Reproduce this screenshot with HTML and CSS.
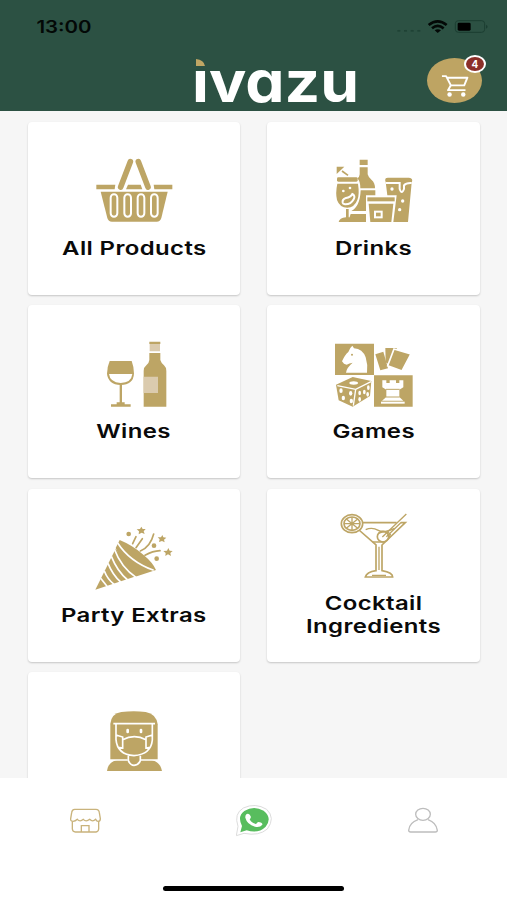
FILE: index.html
```html
<!DOCTYPE html>
<html lang="en">
<head>
<meta charset="utf-8">
<title>ivazu</title>
<link rel="stylesheet" href="styles.css">
</head>
<body>
<div class="app">
  <header class="header">
    <div class="status">
      <div class="time"><span class="wide">13:00</span></div>
      <svg class="status-icons" viewBox="1185 50 285 55">
        <g fill="#1f4235"><rect x="1192" y="89" width="9" height="5"/><rect x="1212" y="89" width="9" height="5"/><rect x="1232" y="89" width="9" height="5"/><rect x="1252" y="89" width="9" height="5"/></g>
        <g fill="none" stroke="#030806" stroke-width="8"><path d="M1286 74Q1313 52 1340 74"/><path d="M1296 84Q1313 70 1331 84"/></g>
        <path d="M1304 90Q1313 83 1323 90L1313 98Z" fill="#030806"/>
        <rect x="1366" y="61" width="88" height="35" rx="9" fill="none" stroke="#1b3d31" stroke-width="3"/>
        <rect x="1373" y="67" width="39" height="24" rx="4" fill="#000"/>
        <path d="M1458 73Q1468 79 1458 85Z" fill="#1b3d31"/>
      </svg>
    </div>
    <div class="nav">
      <svg class="logo" viewBox="190 52 172 56">
        <text class="logo-text" x="192" y="101.5" textLength="167" lengthAdjust="spacingAndGlyphs">ivazu</text>
        <rect x="192" y="52" width="15" height="17.3" fill="#2c5143"/>
        <path d="M196 59Q204 60 205 66H196Z" fill="#c0a664"/>
      </svg>
      <div class="cart">
        <svg class="cart-icon" viewBox="150 188 88 74" fill="none" stroke="#fff" stroke-width="6" stroke-linejoin="round">
          <path d="M153 194H166L181 223H223L233 199H169"/><path d="M181 223L172 238H227"/>
          <circle cx="177" cy="252" r="7" fill="#fff" stroke="none"/><circle cx="220" cy="252" r="7" fill="#fff" stroke="none"/>
        </svg>
        <span class="badge">4</span>
      </div>
    </div>
  </header>

  <main class="grid">
    <div class="card">
      <svg class="icon" viewBox="216 120 252 216" fill="#bda565">
        <path d="M331 140L302 216M355 140L384 216" stroke="#bda565" stroke-width="17" stroke-linecap="round"/>
        <path d="M229 209H286L284 223H229ZM401 209H457V223H403ZM324 209H362L367 223H318Z"/>
        <path d="M242 230H443L424 309Q421 320 410 320H276Q265 320 262 309Z"/>
        <g fill="#bda565" stroke="#fff" stroke-width="6"><rect x="272" y="238" width="20" height="67" rx="10"/><rect x="313" y="238" width="20" height="67" rx="10"/><rect x="353" y="238" width="20" height="67" rx="10"/><rect x="393" y="238" width="20" height="67" rx="10"/></g>
      </svg>
      <div class="label"><span class="wide">All Products</span></div>
    </div>
    <div class="card">
      <svg class="icon" viewBox="36 30 252 216" fill="#bda565">
        <path d="M119 44H143V60H119ZM119 67H143V88Q145 97 155 105Q165 113 165 130H121Q121 108 112 100Q119 96 119 88Z"/>
        <path d="M122 136H166V151H138V198H94Q120 185 122 136ZM92 207H138V231H100Q98 222 88 219Z"/>
        <path d="M50 65H73L50 87Z"/><path d="M66 78L84 91" stroke="#bda565" stroke-width="5"/>
        <rect x="51" y="97" width="62" height="13" rx="4"/>
        <path d="M52 116H114Q119 149 112 165Q103 188 82 188Q59 188 51 165Q46 144 52 116Z"/>
        <path d="M78 192H86V217Q105 219 107 231H56Q58 219 78 217Z"/>
        <path d="M68 173Q66 163 78 159Q92 157 97 147Q107 152 101 163Q92 179 75 178Q69 177 68 173Z" fill="#bda565" stroke="#fff" stroke-width="6"/>
        <g fill="#fff"><circle cx="70" cy="138" r="4"/><circle cx="90" cy="129" r="4"/></g>
        <rect x="142" y="157" width="82" height="12"/><path d="M146 176H220L214 231H151Z"/>
        <rect x="165" y="200" width="20" height="17" fill="none" stroke="#fff" stroke-width="6"/>
        <path d="M197 111Q192 98 204 98H267Q281 99 275 113L264 231H220L230 151H202Z"/>
        <path d="M197 114H239V132Q245 150 252 132V121Q258 113 275 114" fill="none" stroke="#fff" stroke-width="6"/>
        <g fill="#fff"><circle cx="216" cy="132" r="5"/><circle cx="248" cy="168" r="5"/><circle cx="239" cy="194" r="5"/></g>
      </svg>
      <div class="label"><span class="wide">Drinks</span></div>
    </div>
    <div class="card">
      <svg class="icon" viewBox="6 25 252 216" fill="#bda565">
        <path d="M59 94H125Q132 112 132 132Q130 165 92 166Q54 164 51 132Q51 113 59 94Z"/>
        <path d="M57 133H127Q124 159 92 160Q60 158 57 133Z" fill="#fff"/>
        <path d="M89 164H96V218H104V224H122V231H63V224H80V218H89Z"/>
        <path d="M178 36H211V43H178ZM178 70H211V91Q214 101 222 107Q229 113 229 124V231H161V124Q161 113 169 107Q177 101 178 91Z"/>
        <path d="M179 43H210V65H179ZM161 141H204V190H161Z" fill="#dbcbae"/>
      </svg>
      <div class="label"><span class="wide">Wines</span></div>
    </div>
    <div class="card">
      <svg class="icon" viewBox="36 25 252 216" fill="#bda565">
        <path d="M45 42H162V137H278V231H162V136H45Z"/>
        <path d="M91 55L97 48L102 56Q128 58 137 83Q144 105 141 129H78Q79 115 98 99Q88 101 80 105L72 102L66 95Q75 75 85 67Z" fill="#fff"/><circle cx="96" cy="75" r="3"/>
        <path d="M196 55H230V90L218 112L197 98Z"/><path d="M166 74L190 66L204 116L181 122Z"/>
        <path d="M222 58L273 73L246 124L203 108Z" stroke="#fff" stroke-width="5"/>
        <path d="M98 142L154 154L150 199L98 231L56 212L48 165Z"/>
        <path d="M52 168L107 179L153 156M107 179L100 228" fill="none" stroke="#fff" stroke-width="4"/>
        <g fill="#fff"><ellipse cx="101" cy="160" rx="13" ry="5"/><ellipse cx="63" cy="183" rx="5" ry="7"/><ellipse cx="92" cy="191" rx="5" ry="7"/><ellipse cx="70" cy="205" rx="5" ry="7"/><ellipse cx="94" cy="214" rx="5" ry="7"/><ellipse cx="119" cy="190" rx="4" ry="7"/><ellipse cx="133" cy="187" rx="4" ry="7"/><ellipse cx="145" cy="174" rx="4" ry="7"/><ellipse cx="119" cy="209" rx="4" ry="7"/><ellipse cx="143" cy="194" rx="4" ry="7"/></g>
        <path d="M187 152H199V160H209V152H228V160H238V152H250V173L238 180V202L250 213H186L199 202V180L187 173Z" fill="#fff"/>
        <path d="M198 179H239M198 202H239" stroke="#bda565" stroke-width="3"/><path d="M183 219H254" stroke="#fff" stroke-width="6"/>
      </svg>
      <div class="label"><span class="wide">Games</span></div>
    </div>
    <div class="card">
      <svg class="icon" viewBox="36 21 252 216" fill="#bda565">
        <path d="M46 224L107 101L168 184Z"/>
        <path d="M107 99L119 75Q158 91 190 119Q219 143 228 165L166 185Q128 150 107 99Z"/>
        <g fill="none" stroke="#fff" stroke-width="5"><path d="M113 84Q149 140 221 166"/><path d="M103 102Q123 157 169 188"/><path d="M94 124Q112 169 143 195"/><path d="M84 145Q98 180 122 201"/><path d="M73 168Q82 192 103 209"/><path d="M62 190L81 214"/></g>
        <g fill="none" stroke="#bda565" stroke-width="5" stroke-linecap="round"><path d="M158 86L168 65"/><path d="M168 98L187 71"/><path d="M181 108Q211 96 221 57"/><path d="M195 121Q218 108 240 107"/></g>
        <circle cx="146" cy="57" r="7"/><circle cx="222" cy="92" r="7"/><circle cx="230" cy="131" r="7"/>
        <path d="M184 35L188 42L197 42L191 49L194 57L185 53L176 58L177 49L170 43L180 42Z"/>
        <path d="M247 60L250 67L259 68L252 74L254 82L246 78L237 81L239 73L233 67L243 67Z"/>
        <path d="M265 99L269 107L278 108L271 114L273 123L264 118L256 123L257 114L250 108L261 107Z"/>
      </svg>
      <div class="label"><span class="wide">Party Extras</span></div>
    </div>
    <div class="card">
      <svg class="icon" viewBox="96 31 252 216" fill="none" stroke="#bda565" stroke-width="5">
        <ellipse cx="156" cy="72" rx="32" ry="27"/><ellipse cx="156" cy="72" rx="24" ry="20"/>
        <path d="M156 52V92M132 72H180M139 58L173 86M139 86L173 58" stroke-width="4"/>
        <path d="M188 69H290M303 69H316L246 136V213Q278 219 278 232H196Q200 217 228 213V136L177 91"/>
        <path d="M197 90Q216 81 235 92Q250 101 284 86M218 127H252M237 141V211M216 227H258" stroke-width="4"/>
        <ellipse cx="249" cy="111" rx="17" ry="16"/><path d="M237 100Q264 91 271 105L264 118M247 112L319 43M259 111L304 68" stroke-width="4"/>
      </svg>
      <div class="label"><span class="wide">Cocktail<br>Ingredients</span></div>
    </div>
    <div class="card">
      <svg class="icon" viewBox="6 16 252 216" fill="#bda565">
        <path d="M61 181V72Q64 42 94 37Q132 32 167 37Q199 43 203 74V181Z"/>
        <path d="M51 214Q55 184 86 180H180Q210 184 216 214Z"/>
        <g fill="none" stroke="#fff" stroke-width="5"><path d="M70 72H195M78 72V120Q82 165 132 168Q183 164 187 121V72M78 106L98 112V145L85 143M187 106L168 112V145L181 143M98 120Q133 102 168 120M115 168V183Q121 197 132 197Q146 196 151 183V168"/><path d="M56 181H113M153 181H209"/></g>
        <rect x="109" y="87" width="8" height="14" rx="4" fill="#fff"/><rect x="149" y="87" width="8" height="14" rx="4" fill="#fff"/>
      </svg>
      <div class="label"></div>
    </div>
  </main>

  <footer class="tabs">
    <div class="tab-row">
      <div class="tab">
        <svg class="tab-icon" viewBox="51 36 108 108" fill="none" stroke="#c9b37c" stroke-width="4">
          <path d="M74 58H138Q147 58 148 68L151 86Q151 94 144 94Q140 94 137 88Q128 97 119 88Q108 97 100 88Q90 97 82 88Q76 94 69 94Q61 94 62 86L65 68Q66 58 74 58ZM67 95V117Q68 126 76 126H138Q145 125 146 117V95M94 126V107H117V126"/>
        </svg>
      </div>
      <div class="tab">
        <svg class="tab-icon" viewBox="558 36 108 108">
          <path d="M559 137L564 109Q551 71 580 54Q616 37 650 58Q677 84 652 117Q627 139 582 130Z" fill="#fff" stroke="#dcdcdc" stroke-width="3"/>
          <path d="M571 127L576 108Q561 79 583 63Q611 46 641 62Q668 84 647 110Q625 132 590 121Z" fill="#58bd5e"/>
          <path d="M590 72Q598 68 602 79Q604 84 599 88Q604 99 618 102L624 96Q639 98 637 104Q630 113 615 110Q591 103 586 83Q585 76 590 72Z" fill="#fff"/>
        </svg>
      </div>
      <div class="tab">
        <svg class="tab-icon" viewBox="45 36 108 108" fill="none" stroke="#bdbdbd" stroke-width="4">
          <ellipse cx="99" cy="73" rx="22" ry="18"/><path d="M84 89Q58 98 56 121Q56 126 62 126H136Q142 126 142 121Q139 98 114 89"/>
        </svg>
      </div>
    </div>
    <div class="home"></div>
  </footer>
</div>
</body>
</html>
```

FILE: styles.css
```css
* { box-sizing: border-box; }
body { margin: 0; font-family: Inter, "Liberation Sans", sans-serif; }
.app { width: 507px; height: 900px; display: flex; flex-direction: column; overflow: hidden; background: #f6f6f6; }
svg { display: block; }

.header { height: 111px; flex: none; background: #2c5143; }
.status { height: 52px; padding: 1px 17px 0 27px; display: flex; justify-content: space-between; align-items: center; }
.time { width: 74px; text-align: center; font-size: 17px; font-weight: 600; color: #030806; }
.wide { display: inline-block; transform: scaleX(1.2); }
.status-icons { width: 95px; height: 18.33px; }
.nav { height: 59px; padding: 0 25px 0 190px; display: flex; justify-content: space-between; align-items: flex-start; }
.logo { width: 172px; height: 56px; overflow: visible; }
.logo-text { font-family: Inter, sans-serif; font-size: 57px; font-weight: 700; fill: #fff; font-feature-settings: "cv11"; }
.cart { position: relative; width: 55px; height: 45px; margin-top: 6px; border-radius: 50%; background: #bea463; display: flex; justify-content: center; align-items: flex-end; padding-bottom: 5px; }
.cart-icon { width: 28px; height: 24px; }
.badge { position: absolute; top: -3px; right: -4px; width: 22px; height: 18px; border: 2px solid #fff; border-radius: 50%; background: #8c2f29; color: #fff; font-size: 10px; font-weight: 700; line-height: 14px; text-align: center; }

.grid { flex: 1; min-height: 0; overflow: hidden; padding: 11px 27px 0 28px; display: grid; grid-template-columns: 212px 213px; grid-auto-rows: 173px; gap: 10.4px 27px; }
.card { background: #fff; border-radius: 4px; box-shadow: 0 1px 2px rgba(0, 0, 0, .2); display: flex; flex-direction: column; align-items: center; justify-content: center; padding-bottom: 2px; }
.icon { width: 84px; height: 72px; flex: none; }
.label { margin-top: 10px; min-height: 23px; font-size: 19px; line-height: 23px; font-weight: 600; letter-spacing: .3px; color: #0a0a0a; text-align: center; }
.label .wide { transform: scaleX(1.26); }

.tabs { height: 122px; flex: none; background: #fff; display: flex; flex-direction: column; justify-content: space-between; align-items: center; padding-bottom: 9px; }
.tab-row { display: flex; width: 100%; padding-top: 24px; }
.tab { flex: 1; display: flex; justify-content: center; }
.tab-icon { width: 36px; height: 36px; }
.home { width: 181px; height: 5px; border-radius: 3px; background: #000; }
```
